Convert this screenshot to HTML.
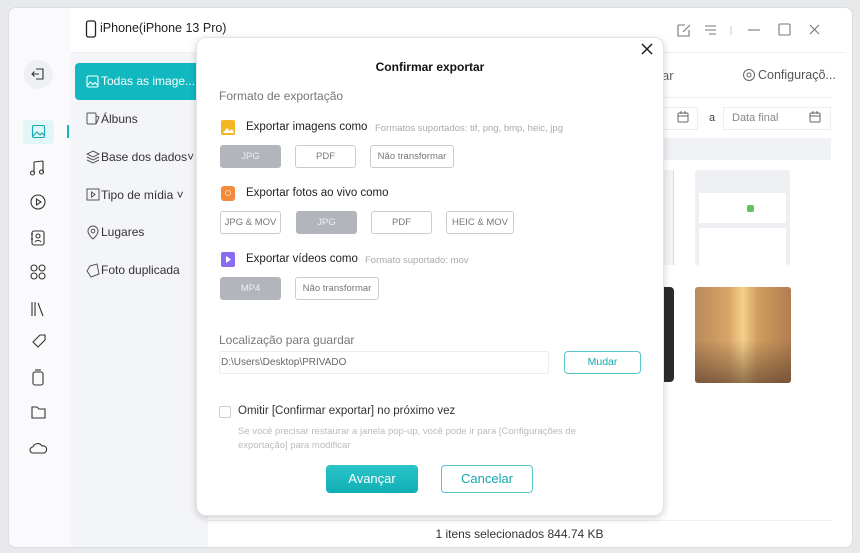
<!DOCTYPE html>
<html><head><meta charset="utf-8"><style>
*{margin:0;padding:0;box-sizing:border-box}
body{width:860px;height:553px;background:#e8e9eb;font-family:"Liberation Sans",sans-serif;position:relative;overflow:hidden;color:#222}
.a{position:absolute}
.win{left:8px;top:7px;width:845px;height:541px;background:#fff;border-radius:8px;border:1px solid #dcdde0;overflow:hidden}
.t{position:absolute;white-space:nowrap}
.btn{position:absolute;height:23px;border:1px solid #c9cbd0;border-radius:3px;font-size:9.5px;color:#777;text-align:center;line-height:21px;background:#fff}
.btn.on{background:#b3b5bc;border-color:#b3b5bc;color:#eee}
svg{position:absolute}
</style></head><body>
<div class="a win">
 <div class="a" style="left:0;top:0;width:62px;height:541px;background:#fafafc"></div>
 <div class="a" style="left:62px;top:45px;width:137px;height:496px;background:#f4f5f8"></div>
 <div class="a" style="left:62px;top:44px;width:775px;height:1px;background:#eef0f2"></div>
</div>
<!-- title -->
<svg style="left:85px;top:20px" width="12" height="18" viewBox="0 0 12 18"><rect x="1.5" y="1" width="9" height="16" rx="2" fill="none" stroke="#222" stroke-width="1.3"/></svg>
<div class="t" style="left:100px;top:21px;font-size:12.5px">iPhone(iPhone 13 Pro)</div>
<!-- window controls -->
<svg style="left:676px;top:22px" width="150" height="16" viewBox="0 0 150 16"><g fill="none" stroke="#777" stroke-width="1.1"><path d="M2 3h7M2 3v11h11V8M7 10l7-7"/><path d="M29 4h11M29 8h11M33 12h7"/><path d="M55 4v9" stroke="#ccc"/><path d="M72 8h12"/><rect x="103" y="2" width="11" height="11" rx="1"/><path d="M134 3l9 9M143 3l-9 9"/></g></svg>
<!-- left icon column -->
<div class="a" style="left:24px;top:60px;width:29px;height:29px;border-radius:50%;background:#eef0f3"></div>
<svg style="left:31px;top:67px" width="14" height="14" viewBox="0 0 14 14"><g fill="none" stroke="#333" stroke-width="1.1"><path d="M5 2h7v10H5M1 7h7M3.5 4.5L1 7l2.5 2.5"/></g></svg>
<div class="a" style="left:23px;top:120px;width:31px;height:24px;border-radius:4px;background:#e3f6f7"></div>
<div class="a" style="left:67px;top:125px;width:2px;height:13px;background:#12b8c0"></div>
<svg style="left:31px;top:124px" width="15" height="15" viewBox="0 0 15 15"><g fill="none" stroke="#12a7ae" stroke-width="1.1"><rect x="1.5" y="1.5" width="12" height="12" rx="1.5"/><path d="M2 12l4-4 3 3 2-2 3 3"/></g></svg>
<svg style="left:29px;top:158px" width="20" height="300" viewBox="0 0 20 300"><g fill="none" stroke="#333" stroke-width="1.1">
<path d="M5 4v11M14 3v11M5 4l9-1"/><circle cx="3.5" cy="15" r="2"/><circle cx="12.5" cy="14" r="2"/>
<circle cx="9" cy="44" r="7"/><path d="M7.5 41v6l4.5-3z"/>
<rect x="3" y="73" width="12" height="14" rx="2"/><circle cx="9" cy="78" r="2"/><path d="M6 84c1-2 5-2 6 0M2 76h2M2 81h2"/>
<circle cx="5" cy="110" r="3"/><circle cx="13" cy="110" r="3"/><circle cx="5" cy="118" r="3"/><circle cx="13" cy="118" r="3"/>
<path d="M3 144v14M6 144v14M9 145l5 13"/>
<path d="M4 184l7-7h5v5l-7 7z"/>
<rect x="4" y="214" width="10" height="13" rx="2"/><path d="M6 212h6"/>
<path d="M3 249h5l2 2h6v9H3z"/>
<path d="M4 295a3 3 0 010-6 5 5 0 019-1 3.5 3.5 0 012 7z"/>
</g></svg>
<!-- nav -->
<div class="a" style="left:75px;top:63px;width:125px;height:37px;background:#12b8c0;border-radius:4px"></div>
<svg style="left:86px;top:75px" width="13" height="13" viewBox="0 0 13 13"><g fill="none" stroke="#fff" stroke-width="1.1"><rect x="1" y="1" width="11" height="11" rx="1.5"/><path d="M1.5 10l3-3 2.5 2.5 2-2 2.5 2.5"/></g></svg>
<div class="t" style="left:101px;top:74px;font-size:12px;color:#fff">Todas as image...</div>
<svg style="left:86px;top:112px" width="14" height="170" viewBox="0 0 14 170"><g fill="none" stroke="#555" stroke-width="1"><rect x="1" y="1" width="9" height="11" rx="1"/><path d="M10 4l3 1-3 7"/>
<path d="M7 39l6 3-6 3-6-3zM1 45l6 3 6-3M1 48l6 3 6-3"/>
<rect x="1" y="77" width="12" height="11"/><path d="M5.5 80v5l3.5-2.5z"/>
<path d="M7 127s5-4 5-8a5 5 0 00-10 0c0 4 5 8 5 8z"/><circle cx="7" cy="119" r="1.8"/>
<path d="M4 154l7-2 2 10-8 3-4-6z"/></g></svg>
<div class="t" style="left:101px;top:112px;font-size:12px;color:#333">Álbuns</div>
<div class="t" style="left:101px;top:150px;font-size:12px;color:#333">Base dos dados˅</div>
<div class="t" style="left:101px;top:188px;font-size:12px;color:#333">Tipo de mídia ˅</div>
<div class="t" style="left:101px;top:225px;font-size:12px;color:#333">Lugares</div>
<div class="t" style="left:101px;top:263px;font-size:12px;color:#333">Foto duplicada</div>
<!-- right content -->
<div class="t" style="left:662px;top:68px;font-size:13px;color:#666">ar</div>
<svg style="left:742px;top:68px" width="14" height="14" viewBox="0 0 14 14"><circle cx="7" cy="7" r="5.5" fill="none" stroke="#666"/><circle cx="7" cy="7" r="2" fill="none" stroke="#666"/></svg>
<div class="t" style="left:758px;top:68px;font-size:12.5px;color:#555">Configuraçõ...</div>
<div class="a" style="left:660px;top:97px;width:172px;height:1px;background:#eef0f2"></div>
<div class="a" style="left:640px;top:107px;width:58px;height:23px;border:1px solid #eceef1;border-left:none"></div>
<div class="t" style="left:709px;top:112px;font-size:11px;color:#444">a</div>
<div class="a" style="left:723px;top:107px;width:108px;height:23px;border:1px solid #eceef1"></div>
<div class="t" style="left:732px;top:112px;font-size:11px;color:#888">Data final</div>
<svg style="left:677px;top:111px" width="150" height="14" viewBox="0 0 150 14"><g fill="none" stroke="#666"><rect x="1" y="2" width="10" height="9" rx="1"/><path d="M1 5h10M4 0v3M8 0v3"/><rect x="133" y="2" width="10" height="9" rx="1"/><path d="M133 5h10M136 0v3M140 0v3"/></g></svg>
<div class="a" style="left:640px;top:138px;width:191px;height:22px;background:#f1f2f6"></div>
<div class="a" style="left:640px;top:170px;width:34px;height:95px;background:#f3f4f6;border-right:1px solid #ddd"></div>
<div class="a" style="left:695px;top:170px;width:95px;height:95px;background:#eeeff3;border-radius:3px"></div>
<div class="a" style="left:699px;top:193px;width:87px;height:30px;background:#fff"></div>
<div class="a" style="left:747px;top:205px;width:7px;height:7px;background:#5ec25e;border-radius:2px"></div>
<div class="a" style="left:699px;top:228px;width:87px;height:37px;background:#fff"></div>
<div class="a" style="left:640px;top:287px;width:34px;height:95px;background:#2a2c2a;border-radius:0 4px 4px 0"></div>
<div class="a" style="left:695px;top:287px;width:96px;height:96px;border-radius:3px;background:linear-gradient(90deg,#b88a5a,#d9a468 35%,#f4d08a 50%,#d29d60 65%,#b07e50)"></div>
<div class="a" style="left:695px;top:340px;width:96px;height:43px;border-radius:0 0 3px 3px;background:linear-gradient(180deg,rgba(150,100,60,0),rgba(80,55,40,.6))"></div>
<div class="a" style="left:207px;top:520px;width:625px;height:1px;background:#eef0f2"></div>
<div class="t" style="left:207px;top:527px;width:625px;text-align:center;font-size:12px;color:#333">1 itens selecionados 844.74 KB</div>
<!-- modal -->
<div class="a" style="left:196px;top:37px;width:468px;height:479px;background:#fff;border-radius:10px;box-shadow:0 2px 8px rgba(0,0,0,.18);border:1px solid #e2e3e6"></div>
<svg style="left:641px;top:43px" width="12" height="12" viewBox="0 0 12 12"><path d="M1 1l10 10M11 1L1 11" stroke="#222" stroke-width="1.5"/></svg>
<div class="t" style="left:196px;top:60px;width:468px;text-align:center;font-size:12px;font-weight:bold;color:#111">Confirmar exportar</div>
<div class="t" style="left:219px;top:89px;font-size:12px;color:#777">Formato de exportação</div>
<div class="a" style="left:221px;top:120px;width:14px;height:15px;background:#f5b623;border-radius:2px"></div>
<svg style="left:221px;top:120px" width="14" height="15"><path d="M2 13l4-5 3 3 2-2 2 4z" fill="#fff"/></svg>
<div class="t" style="left:246px;top:121px;font-size:11.5px;color:#222">Exportar imagens como</div>
<div class="t" style="left:375px;top:123px;font-size:9.5px;color:#aaa">Formatos suportados: tif, png, bmp, heic, jpg</div>
<div class="btn on" style="left:220px;top:145px;width:61px">JPG</div>
<div class="btn" style="left:295px;top:145px;width:61px">PDF</div>
<div class="btn" style="left:370px;top:145px;width:84px">Não transformar</div>
<div class="a" style="left:221px;top:186px;width:14px;height:15px;background:#f58a3c;border-radius:3px"></div>
<div class="a" style="left:225px;top:190px;width:6px;height:6px;border:1px solid #ffd0a8;border-radius:50%"></div>
<div class="t" style="left:246px;top:187px;font-size:11.5px;color:#222">Exportar fotos ao vivo como</div>
<div class="btn" style="left:220px;top:211px;width:61px">JPG &amp; MOV</div>
<div class="btn on" style="left:296px;top:211px;width:61px">JPG</div>
<div class="btn" style="left:371px;top:211px;width:61px">PDF</div>
<div class="btn" style="left:446px;top:211px;width:68px">HEIC &amp; MOV</div>
<div class="a" style="left:221px;top:252px;width:14px;height:15px;background:#8a6cf0;border-radius:2px"></div>
<svg style="left:221px;top:252px" width="14" height="15"><path d="M5 4v7l5-3.5z" fill="#fff"/></svg>
<div class="t" style="left:246px;top:253px;font-size:11.5px;color:#222">Exportar vídeos como</div>
<div class="t" style="left:365px;top:255px;font-size:9.5px;color:#aaa">Formato suportado: mov</div>
<div class="btn on" style="left:220px;top:277px;width:61px">MP4</div>
<div class="btn" style="left:295px;top:277px;width:84px">Não transformar</div>
<div class="t" style="left:219px;top:333px;font-size:12px;color:#777">Localização para guardar</div>
<div class="a" style="left:219px;top:351px;width:330px;height:23px;border:1px solid #eceef1;border-radius:2px"></div>
<div class="t" style="left:221px;top:357px;font-size:10px;color:#666">D:\Users\Desktop\PRIVADO</div>
<div class="a" style="left:564px;top:351px;width:77px;height:23px;border:1px solid #5cc5c9;border-radius:4px;text-align:center;line-height:21px;font-size:10.5px;color:#12a7ae">Mudar</div>
<div class="a" style="left:219px;top:406px;width:12px;height:12px;border:1px solid #ccc;border-radius:2px"></div>
<div class="t" style="left:238px;top:405px;font-size:11.5px;color:#333">Omitir [Confirmar exportar] no próximo vez</div>
<div class="t" style="left:238px;top:425px;font-size:9.5px;color:#bbb;line-height:14px;white-space:normal;width:380px">Se você precisar restaurar a janela pop-up, você pode ir para [Configurações de exportação] para modificar</div>
<div class="a" style="left:326px;top:465px;width:92px;height:28px;border-radius:4px;background:linear-gradient(#2cc5c8,#10aeb5);color:#fff;text-align:center;line-height:28px;font-size:13px">Avançar</div>
<div class="a" style="left:441px;top:465px;width:92px;height:28px;border-radius:4px;border:1px solid #5cc5c9;color:#12a7ae;text-align:center;line-height:26px;font-size:13px">Cancelar</div>
</body></html>
